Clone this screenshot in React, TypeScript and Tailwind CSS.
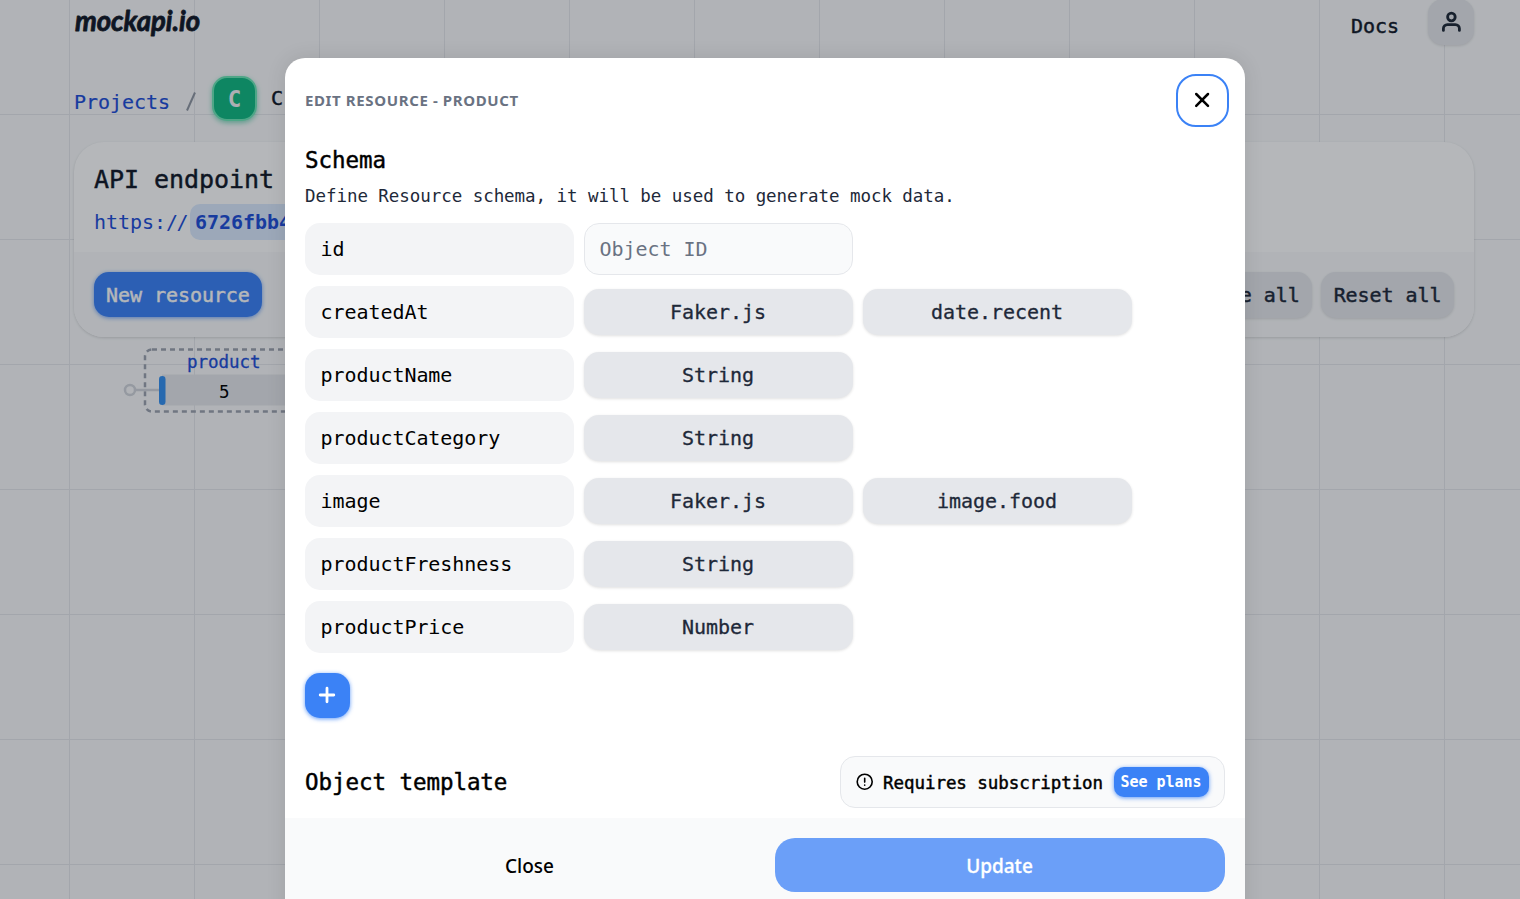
import React from "react";

type Field = { name: string; type: string; method?: string };

const fields: Field[] = [
  { name: "createdAt", type: "Faker.js", method: "date.recent" },
  { name: "productName", type: "String" },
  { name: "productCategory", type: "String" },
  { name: "image", type: "Faker.js", method: "image.food" },
  { name: "productFreshness", type: "String" },
  { name: "productPrice", type: "Number" },
];

const mono = "font-['DejaVu_Sans_Mono',monospace] tracking-[-0.0035em]";
const medium = "[-webkit-text-stroke:0.45px_currentColor]";

function Logo() {
  return (
    <svg width="130" height="50" viewBox="0 0 130 50" className="-ml-px -mt-px overflow-visible" aria-label="mockapi.io">
      <text
        x="2"
        y="31.5"
        textLength="125"
        lengthAdjust="spacingAndGlyphs"
        fill="#111827"
        stroke="#111827"
        strokeWidth="0.8"
        strokeLinejoin="round"
        className="font-['Lato',sans-serif] text-[29px] font-bold italic"
      >
        mockapi.io
      </text>
    </svg>
  );
}

function UserIcon() {
  return (
    <svg width="20" height="22" viewBox="0 0 20 22" fill="none" stroke="#1f2937" strokeWidth="2.8" strokeLinecap="round">
      <circle cx="10.4" cy="6" r="3.8" />
      <path d="M2.400 19.400v-1.800a4 4 0 0 1 4-4h8a4 4 0 0 1 4 4v1.800" />
    </svg>
  );
}

function GrayButton({ children }: { children: React.ReactNode }) {
  return (
    <div className="flex h-[46px] items-center rounded-[15px] bg-gray-200 px-[12.500px] text-[20px] text-gray-800 shadow-[0_1px_3px_rgba(0,0,0,0.12)]">
      <span className={medium}>{children}</span>
    </div>
  );
}

function Backdrop() {
  return (
    <div className="h-full bg-[#f9fafb] bg-[linear-gradient(to_right,#e5e7eb_1px,transparent_1px),linear-gradient(to_bottom,#e5e7eb_1px,transparent_1px)] bg-[size:125px_125px] bg-[position:69px_114px] pl-[74px] pr-[46px]">
      <header className="flex h-[76px] items-start justify-between">
        <Logo />
        <div className="flex items-start">
          <span className={`mt-[11px] text-[20px] leading-[30px] text-gray-900 ${medium}`}>Docs</span>
          <div className="-mt-px ml-[29px] flex size-[46px] items-center justify-center rounded-[15px] bg-gray-200 shadow-[0_1px_3px_rgba(0,0,0,0.12)]">
            <UserIcon />
          </div>
        </div>
      </header>

      <nav className="flex h-[66px] items-start text-[20px] leading-[30px]">
        <span className="mt-[11px] text-[#1d4ed8] [-webkit-text-stroke:0.2px_currentColor]">Projects</span>
        <svg width="12" height="24" viewBox="0 0 12 24" className="ml-[15px] mt-[13px]" stroke="#9097a3" strokeWidth="2">
          <path d="M2 21.500L10 3.500" />
        </svg>
        <div className="ml-[15px] flex size-[45px] items-center justify-center rounded-[15px] border-2 border-[#6ee7b7] bg-[#10b981] text-[22.500px] font-bold text-[#f3f4f6] shadow-[0_2px_5px_rgba(16,185,129,0.5)]">
          C
        </div>
        <span className={`ml-[14px] mt-[7px] text-gray-900 ${medium}`}>C</span>
      </nav>

      <section className="h-[195px] overflow-hidden rounded-[30px] bg-white shadow-[0_1px_3px_rgba(0,0,0,0.15)]">
        <div className="h-[110px] px-[20px] pt-[20px]">
          <h2 className={`text-[25px] leading-[35px] text-gray-900 ${medium}`}>API endpoint</h2>
          <div className="mt-[7px] flex h-[36px] items-center text-[20px] text-[#1d4ed8]">
            <span>https:</span>
            <span className="tracking-[-1.500px]">//</span>
            <span className="ml-[3px] flex h-[36px] items-center rounded-[10px] bg-[#dbeafe] px-[5px] font-bold">
              6726fbb4
            </span>
          </div>
        </div>
        <div className="flex h-[85px] items-start justify-between bg-[#f9fafb] px-[20px] pt-[20px]">
          <div className="flex h-[45px] items-center rounded-[15px] bg-[#3b82f6] px-[12px] text-[20px] text-white shadow-[0_1px_4px_rgba(59,130,246,0.7)]">
            <span className={medium}>New resource</span>
          </div>
          <div className="flex gap-[9px]">
            <GrayButton>Generate all</GrayButton>
            <GrayButton>Reset all</GrayButton>
          </div>
        </div>
      </section>

      <div className="relative">
        <svg className="absolute left-[46px] top-[8px]" width="220" height="72" fill="none">
          <rect x="25" y="4.500" width="190" height="62" rx="7" stroke="#9ca3af" strokeWidth="2.500" strokeDasharray="5 4" />
          <circle cx="10" cy="45" r="5" stroke="#d1d5db" strokeWidth="2.500" />
          <path d="M15 45h24" stroke="#d1d5db" strokeWidth="2.500" />
          <rect x="42" y="29.500" width="170" height="31" fill="#e5e7eb" />
          <rect x="39" y="31" width="6.500" height="29" rx="3.250" fill="#3490f0" />
        </svg>
        <span className="absolute left-[113px] top-[12px] text-[17.500px] leading-[26px] text-[#1d4ed8] [-webkit-text-stroke:0.3px_currentColor]">product</span>
        <span className="absolute left-[145px] top-[42px] text-[17.500px] leading-[26px] text-black">5</span>
      </div>
    </div>
  );
}

function NameCell({ children }: { children: React.ReactNode }) {
  return (
    <div className="flex h-[52px] w-[269px] items-center rounded-[15px] bg-[#f3f4f6] px-[15.500px] text-[20px] text-black">
      {children}
    </div>
  );
}

function TypeCell({ children }: { children: React.ReactNode }) {
  return (
    <div className="flex h-[46px] w-[269px] items-center justify-center rounded-[15px] bg-gray-200 pr-px text-[20px] text-gray-800 shadow-[0_1px_3px_rgba(0,0,0,0.12)] [-webkit-text-stroke:0.3px_currentColor]">
      {children}
    </div>
  );
}

function Modal() {
  return (
    <div className="flex h-[960px] w-[960px] flex-col overflow-hidden rounded-[20px] bg-white shadow-[0_0_20px_rgba(0,0,0,0.1)]">
      <div className="flex h-[88px] items-start justify-between pl-[20px] pr-[16px] pt-[16px]">
        <h1 className="mt-[16px] -translate-y-px font-['Noto_Sans',sans-serif] text-[15px] font-bold leading-[22px] tracking-[0.620px] text-gray-500">
          EDIT RESOURCE - PRODUCT
        </h1>
        <div className="flex size-[53px] items-center justify-center rounded-[20px] border-2 border-[#3b82f6]">
          <svg width="17" height="17" viewBox="0 0 17 17" stroke="#000" strokeWidth="2.500" strokeLinecap="round">
            <path d="M2.200 2l11.800 11.800M14 2L2.200 13.800" />
          </svg>
        </div>
      </div>

      <div className="flex h-[672px] flex-col px-[20px]">
        <h2 className={`text-[22.500px] leading-[28px] text-black ${medium}`}>Schema</h2>
        <p className="mt-[10px] whitespace-nowrap text-[17.500px] leading-[25px] text-gray-800">
          Define Resource schema, it will be used to generate mock data.
        </p>

        <div className="mt-[14px] flex flex-col gap-[11px]">
          <div className="flex items-center gap-[10px]">
            <NameCell>id</NameCell>
            <div className="flex h-[52px] w-[269px] items-center rounded-[15px] border border-gray-200 bg-[#f9fafb] px-[14.500px] text-[20px] text-gray-500">
              Object ID
            </div>
          </div>
          {fields.map((f) => (
            <div key={f.name} className="flex h-[52px] items-center gap-[10px]">
              <NameCell>{f.name}</NameCell>
              <TypeCell>{f.type}</TypeCell>
              {f.method && <TypeCell>{f.method}</TypeCell>}
            </div>
          ))}
        </div>

        <div className="mt-[20px] flex size-[45px] items-center justify-center rounded-[15px] bg-[#3b82f6] shadow-[0_1px_4px_rgba(59,130,246,0.8)]">
          <svg width="19" height="19" viewBox="0 0 19 19" stroke="#fff" strokeWidth="2.800" strokeLinecap="round">
            <path d="M9 2.200v13.600M2.200 9h13.600" />
          </svg>
        </div>

        <div className="mt-[38px] flex h-[52px] items-center justify-between">
          <h2 className={`pt-[2px] text-[22.500px] text-black ${medium}`}>Object template</h2>
          <div className="flex h-[52px] w-[385px] items-center rounded-[15px] border border-gray-200 bg-[#f9fafb] px-[15px]">
            <svg width="18" height="18" viewBox="0 0 18 18" fill="none" stroke="#000" strokeWidth="1.600" strokeLinecap="round">
              <circle cx="8.700" cy="8.700" r="7.500" />
              <path d="M8.700 5.200v3.900M8.700 12v.2" />
            </svg>
            <span className={`ml-[9px] whitespace-nowrap pt-[2px] text-[17.500px] text-black ${medium}`}>Requires subscription</span>
            <div className="ml-auto flex h-[30px] w-[95px] shrink-0 items-center justify-center rounded-[10px] bg-[#3b82f6] pr-px text-[15px] font-bold text-white shadow-[0_1px_4px_rgba(59,130,246,0.8)]">
              See plans
            </div>
          </div>
        </div>
      </div>

      <div className="flex flex-1 items-start gap-[20px] bg-[#f9fafb] px-[20px] pt-[20px] font-['Noto_Sans',sans-serif] text-[19px] font-medium tracking-normal">
        <div className="flex h-[54px] w-[450px] items-center justify-center pr-px pt-[2px] text-black">Close</div>
        <div className="flex h-[54px] w-[450px] items-center justify-center rounded-[20px] bg-[#6b9ff8] pr-px pt-[2px] text-white [-webkit-text-stroke:0.3px_currentColor]">
          Update
        </div>
      </div>
    </div>
  );
}

export default function App() {
  return (
    <div className={`relative h-[899px] w-[1520px] overflow-hidden ${mono}`}>
      <Backdrop />
      <div className="absolute inset-0 flex items-start overflow-hidden bg-[#0a0f1a]/30 pl-[285px] pt-[58px]">
        <Modal />
      </div>
    </div>
  );
}
